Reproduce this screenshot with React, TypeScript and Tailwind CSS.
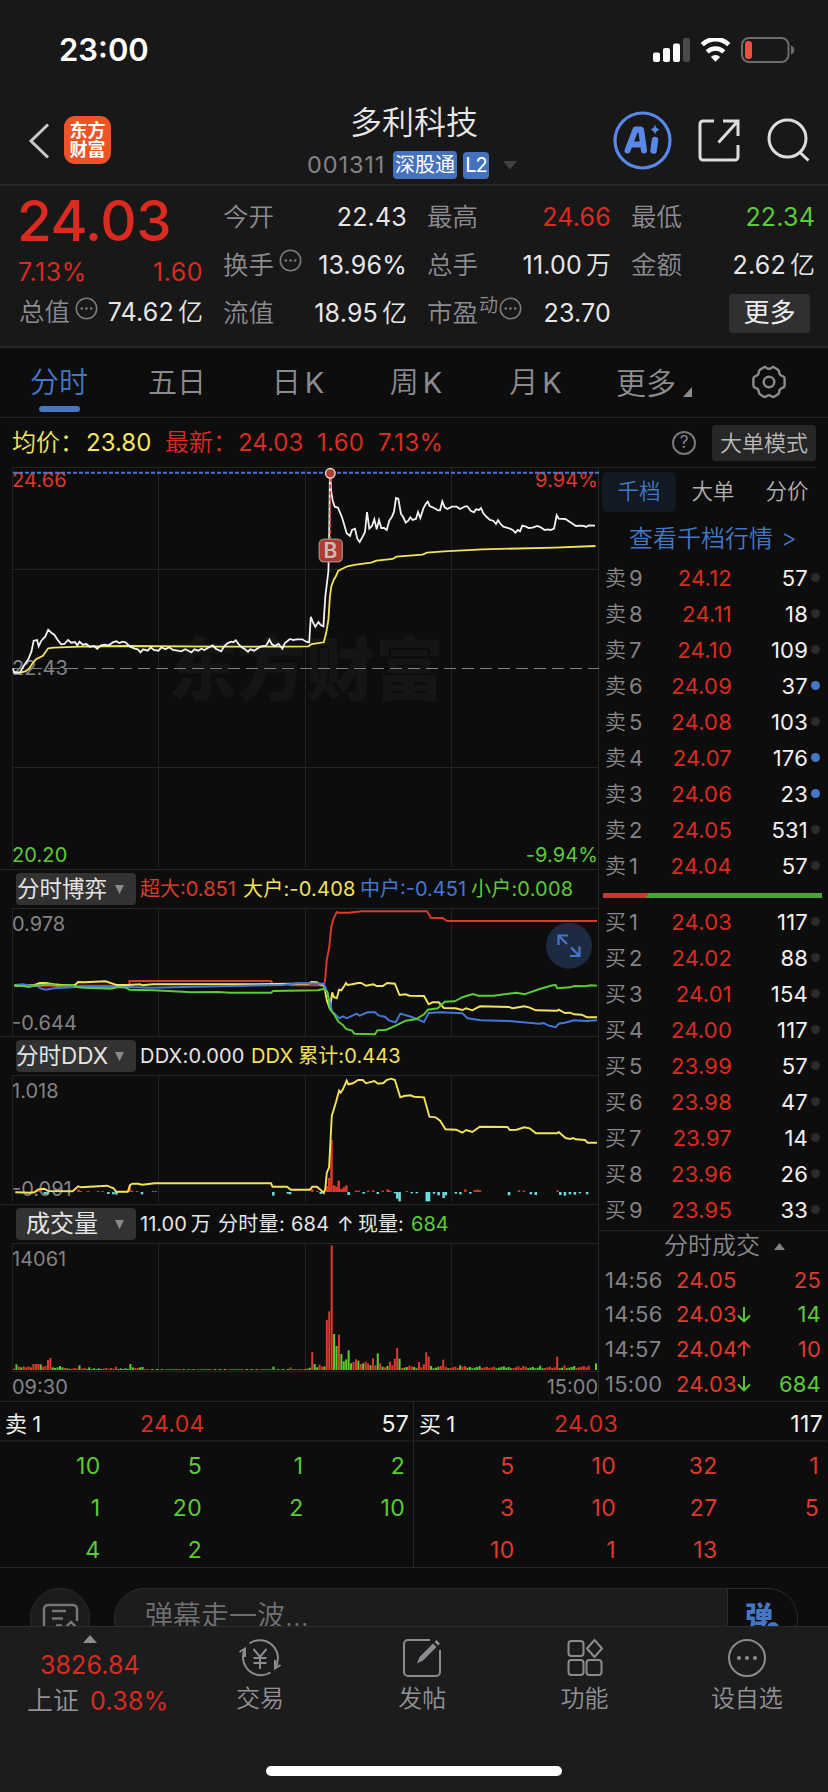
import type { ReactNode } from 'react';

const CX = 2.613;

/** Turns "x,y x,y" samples into polyline points in chart coordinates. */
function line(samples: string, sx: number, sy: number, ox: number, oy: number): string {
  return samples
    .trim()
    .split(/\s+/)
    .map((p) => {
      const [x, y] = p.split(',').map(Number);
      return `${(ox + x / sx).toFixed(1)},${(oy + y / sy).toFixed(1)}`;
    })
    .join(' ');
}

const PRICE_AM =
  '34,776 37,788 52,788 62,768 74,748 82,725 88,692 97,690 101,709 108,692 118,680 126,659 134,668 142,674 152,692 160,703 168,702 178,690 186,698 196,696 202,706 208,695 216,704 226,702 234,710 246,708 254,716 264,706 274,704 284,706 296,696 304,694 312,699 320,695 328,697 340,710 352,716 360,718 367,727 374,718 386,722 394,712 402,720 414,722 422,712 432,718 442,712 452,720 464,722 474,724 484,718 492,722 500,727 508,718 518,722 526,716 534,720 546,712 556,706 564,716 578,724 584,712 594,700 604,695 610,697 616,691 624,703 632,712 640,718 648,725 654,718 664,722 672,716 680,710 690,708 696,706 704,689 710,702 718,708 728,702 738,716 744,700 752,692 758,687 766,690 776,688 790,688 800,695 808,697 812,620 818,638 824,650 832,636 838,645 845,649 850,560 858,484 860,400 862,190';
const PRICE_PM =
  '151,100 153,150 158,182 164,200 174,203 186,232 200,280 210,288 216,270 225,266 232,296 239,306 248,290 255,276 261,216 268,266 276,258 283,238 290,268 297,240 304,264 312,264 320,270 328,242 336,230 342,215 348,174 355,176 363,222 370,232 377,248 385,242 391,232 398,240 408,236 414,216 421,234 430,206 437,192 443,185 449,198 458,202 466,206 474,211 480,211 487,184 494,202 502,207 516,200 530,200 540,207 556,199 562,199 572,212 582,217 588,208 597,210 603,204 610,220 620,231 630,240 640,242 648,252 654,241 662,252 670,260 680,263 690,266 698,270 706,278 714,270 720,274 727,257 738,260 746,264 758,263 766,260 772,258 782,262 794,270 802,268 812,270 822,266 830,226 836,236 856,237 870,246 888,258 900,257 912,258 918,261 926,256 945,257';
const AVERAGE =
  '34,786 52,788 66,784 76,776 84,762 94,748 112,737 126,715 140,713 210,710 330,708 560,710 740,710 806,709 814,702 846,697 852,670 858,630 862,560 866,528 872,510 878,498 884,482 900,473 910,468 930,464 970,458 984,452 1026,447 1036,440 1104,434 1116,428 1160,424 1260,418 1450,413 1556,408';

const GAME = [
  {
    color: '#dd3a2e',
    pts: '38,362 338,362 338,348 708,348 712,356 750,357 760,361 846,361 849,350 854,284 860,250 866,184 872,160 880,141 884,143 910,143 946,139 1116,139 1126,158 1156,159 1168,168 1560,168',
  },
  {
    color: '#f3e35c',
    pts: '38,362 90,360 104,354 120,354 140,358 160,360 196,360 204,351 220,352 276,349 294,356 304,360 336,360 366,358 372,361 400,358 520,358 640,358 760,356 806,356 814,351 828,352 836,358 847,362 854,406 862,432 868,382 872,396 880,400 886,374 892,376 900,362 904,354 908,360 920,358 936,354 944,354 956,362 976,358 984,363 1000,363 1012,354 1032,356 1044,390 1060,388 1070,392 1108,393 1120,418 1130,412 1146,412 1160,429 1190,430 1208,435 1218,430 1234,436 1254,424 1330,426 1340,430 1370,424 1384,428 1400,436 1456,437 1460,434 1476,444 1490,443 1500,448 1520,449 1534,457 1560,457',
  },
  {
    color: '#4477d6',
    pts: '38,360 60,358 80,362 96,362 106,370 120,374 140,370 200,366 336,366 400,368 480,366 640,362 740,360 780,354 846,356 852,372 862,410 868,440 876,448 886,460 896,454 906,460 932,446 940,452 960,442 980,442 990,452 1006,455 1016,466 1034,472 1046,446 1076,456 1108,471 1120,444 1150,442 1208,445 1222,460 1256,466 1330,468 1410,476 1420,474 1434,482 1452,487 1460,476 1476,473 1500,466 1530,468 1560,466',
  },
  {
    color: '#5bcb36',
    pts: '38,360 64,364 76,366 90,362 110,360 130,358 150,362 190,360 200,366 220,368 290,371 310,366 330,368 338,374 400,376 440,378 500,382 570,381 600,383 708,383 714,378 830,376 846,372 856,382 862,432 874,450 884,470 896,480 904,492 920,497 926,506 980,508 986,496 1010,494 1034,482 1060,467 1088,462 1108,448 1118,434 1144,430 1162,410 1188,409 1210,396 1236,387 1250,392 1290,392 1350,383 1370,388 1410,372 1444,361 1452,360 1456,370 1490,367 1500,363 1530,364 1544,361 1560,362',
  },
];

const DDX =
  '40,487 80,488 90,487 100,478 116,476 126,483 190,484 204,469 212,472 280,467 290,472 296,474 304,485 334,485 340,465 346,461 360,461 372,464 404,460 708,460 712,470 750,470 760,479 810,479 816,470 828,470 838,480 846,489 850,476 854,428 860,412 867,258 878,216 886,182 890,188 896,178 906,152 910,163 922,160 936,150 948,150 956,160 978,153 988,161 1002,159 1010,150 1022,146 1032,150 1046,202 1056,198 1072,196 1082,200 1108,202 1122,260 1138,262 1150,272 1164,298 1192,299 1208,308 1218,300 1234,306 1254,290 1326,291 1332,300 1350,299 1370,292 1384,295 1400,310 1456,310 1460,306 1478,324 1490,327 1498,324 1504,328 1528,330 1536,338 1560,338';

/** [x, signed height] pairs; positive is inflow, negative is outflow. */
const DDX_BARS: [number, number][] = [
  [98, 5], [104, 8], [117, -6], [124, -8], [205, 8], [211, 3], [230, 3], [256, 3], [268, 3], [283, -6], [296, -7], [304, -8],
  [339, 20], [345, 4], [358, 3], [371, -7], [400, 3], [407, 3], [714, -11], [752, -5], [758, -7], [816, 8], [829, 3], [838, -6],
  [854, 18], [860, 42], [866, 156], [873, 20], [879, 16], [885, 34], [892, 9], [898, 14], [905, 20], [911, -9], [930, 4], [937, 4],
  [950, -5], [962, 4], [975, 5], [987, -6], [1000, 4], [1013, 8], [1019, 4], [1032, -4], [1038, -20], [1044, -28], [1063, 3], [1076, -4],
  [1089, -4], [1115, -28], [1121, -28], [1134, -5], [1146, -10], [1159, -18], [1165, -10], [1191, -5], [1203, -7], [1216, 8],
  [1229, -5], [1241, 6], [1248, 7], [1254, 5], [1330, -10], [1356, 5], [1369, 4], [1387, -7], [1400, -9], [1457, 5], [1464, -9],
  [1476, -11], [1489, -7], [1502, -8], [1515, -4], [1534, -7],
];

/** Minute index at x, with signed height: positive is up (red), negative is down (green). */
const VOLUME_PEAKS: Record<number, number> = {
  0: 4, 1: -17, 2: 10, 3: -8, 4: 11, 5: 8, 6: 11, 7: 8, 8: 18, 9: 18, 10: 18, 11: -17, 12: 10, 13: 12, 14: 30, 15: 36,
  16: -8, 17: -6, 18: -8, 19: -12, 20: -8, 21: 6, 27: -14, 31: -8, 42: 10, 48: -18, 49: -8, 50: 6, 52: -8, 53: -9,
  107: -10, 114: 8, 121: -4, 123: 54, 124: -18, 125: -8, 126: 16, 127: 10, 128: -11, 129: 150, 130: 176, 131: 374,
  132: -108, 133: -72, 134: 106, 135: -48, 136: -26, 137: -32, 138: -59, 139: -20, 140: 24, 141: 32, 142: -28, 143: 18,
  144: -20, 145: 25, 146: 20, 147: -14, 148: 35, 149: 14, 150: -50, 151: 20, 152: -10, 153: 8, 154: -12, 155: 25,
  156: 14, 157: 34, 158: 66, 159: -34, 160: 6, 163: 13, 164: 11, 167: 24, 168: 8, 169: 17, 170: 53, 171: 40, 172: -12,
  175: -10, 176: 12, 177: 31, 178: 10, 184: -14, 186: 12, 192: -12, 202: -11, 208: 11, 210: 12, 217: -13, 224: 40,
  227: 14, 231: -12, 235: 12, 237: 13, 238: 0, 239: 0, 240: -20,
};

function volumeAt(i: number): number {
  if (i in VOLUME_PEAKS) return VOLUME_PEAKS[i];
  const seed = (i * 7919 + 31) % 13;
  const sign = seed % 2 ? 1 : -1;
  if (i < 53) return sign * (3 + (seed % 4));
  if (i < 122) return sign * (seed % 4 === 0 ? 1 : 3);
  return sign * (5 + (seed % 6));
}

const SELLS: [number, string, number, boolean][] = [
  [9, '24.12', 57, false],
  [8, '24.11', 18, false],
  [7, '24.10', 109, false],
  [6, '24.09', 37, true],
  [5, '24.08', 103, false],
  [4, '24.07', 176, true],
  [3, '24.06', 23, true],
  [2, '24.05', 531, false],
  [1, '24.04', 57, false],
];

const BUYS: [number, string, number, boolean][] = [
  [1, '24.03', 117, false],
  [2, '24.02', 88, false],
  [3, '24.01', 154, false],
  [4, '24.00', 117, false],
  [5, '23.99', 57, false],
  [6, '23.98', 47, false],
  [7, '23.97', 14, false],
  [8, '23.96', 26, false],
  [9, '23.95', 33, false],
];

function StatusBar() {
  return (
    <div className="flex h-[100px] items-center justify-between pl-[59px] pr-[33px]">
      <span className="text-[31px] font-semibold text-white">23:00</span>
      <div className="flex items-center gap-[10px]">
        <svg width="37" height="24" viewBox="0 0 37 24">
          <rect x="0" y="14.5" width="7" height="9.5" rx="2" fill="#fff" />
          <rect x="10" y="10" width="7" height="14" rx="2" fill="#fff" />
          <rect x="20" y="5.5" width="7" height="18.5" rx="2" fill="#fff" />
          <rect x="30" y="0" width="7" height="24" rx="2" fill="#4a4a4a" />
        </svg>
        <svg width="31" height="24" viewBox="0 0 31 24">
          <path d="M2.2 8.6a19 19 0 0 1 26.6 0" fill="none" stroke="#fff" strokeWidth="4.6" transform="translate(0 -2)" />
          <path d="M7.2 14.2a12 12 0 0 1 16.6 0" fill="none" stroke="#fff" strokeWidth="4.4" transform="translate(0 -.4)" />
          <path d="M15.5 23.8l-4.6-4.9a6.8 6.8 0 0 1 9.2 0z" fill="#fff" />
        </svg>
        <svg width="54" height="26" viewBox="0 0 54 26">
          <rect x="1" y="1" width="46.500" height="24" rx="7" fill="none" stroke="#6d6d6d" strokeWidth="2" />
          <rect x="4" y="4" width="7" height="18" rx="3" fill="#e8513f" />
          <path d="M50 8.500c2.200.8 3.300 2.500 3.300 4.500s-1.100 3.700-3.300 4.500z" fill="#6d6d6d" />
        </svg>
      </div>
    </div>
  );
}

function Header() {
  return (
    <div className="flex h-[84px] items-start">
      <svg className="ml-[28px] mt-[23px]" width="22" height="36" viewBox="0 0 22 36">
        <path d="M20 1.500L3 18l17 16.500" fill="none" stroke="#c9c9c9" strokeWidth="3" />
      </svg>
      <div className="ml-[14px] mt-[16px] flex h-[48px] w-[47px] flex-col items-center justify-center rounded-[11px] bg-[#ec5428] text-[18px] font-bold leading-[19px] text-white">
        <span>东方</span>
        <span>财富</span>
      </div>
      <div className="ml-[143px] mt-[5px] flex w-[320px] flex-col items-center">
        <div className="flex h-[36px] items-center text-[32px] font-[350] leading-none text-[#e8e8e8]">多利科技</div>
        <div className="mt-[8px] flex h-[32px] w-[320px] items-center pl-[53px]">
          <span className="w-[86px] text-[23.500px] leading-none tracking-[0.9px] text-[#838387]">001311</span>
          <span className="flex h-[28px] w-[64px] items-center justify-center rounded-[4px] bg-[#4472bd] text-[20px] leading-none text-white">深股通</span>
          <span className="ml-[6px] flex h-[27px] w-[26px] items-center justify-center rounded-[4px] bg-[#4472bd] text-[20px] leading-none tracking-[-1px] text-white">L2</span>
          <svg className="ml-[14px]" width="14" height="9" viewBox="0 0 14 9">
            <path d="M0 0h14L7 8.500z" fill="#414141" />
          </svg>
        </div>
      </div>
      <svg className="ml-[39px] mt-[11px]" width="59" height="59" viewBox="0 0 59 59">
        <circle cx="29.500" cy="29.500" r="27.500" fill="none" stroke="#5a88e8" strokeWidth="3.200" />
        <path d="M14.500 39.500L22.500 18.500h5.500l3 21M19 33.500h11" fill="none" stroke="#5a88e8" strokeWidth="6" strokeLinejoin="round" strokeLinecap="round" />
        <path d="M42 29l-1.400 10.500" stroke="#5a88e8" strokeWidth="6.500" strokeLinecap="round" />
        <path d="M42 13.500q1 4.500 5 5q-4 .8-5 5q-1-4.200-5-5q4-.5 5-5z" fill="#5a88e8" />
      </svg>
      <svg className="ml-[26px] mt-[19px]" width="43" height="43" viewBox="0 0 43 43" fill="none" stroke="#dcdcdc" strokeWidth="3">
        <path d="M16 2H5a3 3 0 0 0-3 3v33a3 3 0 0 0 3 3h32a3 3 0 0 0 3-3V26" />
        <path d="M25 2h15v15M40 2L20.500 23.500" />
      </svg>
      <svg className="ml-[26px] mt-[18px]" width="44" height="44" viewBox="0 0 44 44" fill="none" stroke="#dcdcdc" strokeWidth="3">
        <circle cx="20.500" cy="20.500" r="18.500" />
        <path d="M32.500 34l9 8.500" />
      </svg>
    </div>
  );
}

function More({ className }: { className: string }) {
  return (
    <svg className={className} width="23" height="23" viewBox="0 0 23 23">
      <circle cx="11.500" cy="11.500" r="10.200" fill="none" stroke="#7b7b7f" strokeWidth="1.600" />
      <circle cx="6.800" cy="11.500" r="1.300" fill="#7b7b7f" />
      <circle cx="11.500" cy="11.500" r="1.300" fill="#7b7b7f" />
      <circle cx="16.200" cy="11.500" r="1.300" fill="#7b7b7f" />
    </svg>
  );
}

function Stat({ label, value, unit, tone = 'text-[#e6e6e6]', extra }: { label: string; value: string; unit?: string; tone?: string; extra?: ReactNode }) {
  return (
    <div className="flex h-[48px] items-center leading-none">
      <span className="text-[25.500px] font-[350] text-[#8c8c90]">{label}</span>
      {extra}
      <span className={`ml-auto whitespace-nowrap text-[25px] tracking-[0.2px] ${tone}`}>{value}</span>
      {unit && <span className={`ml-[4px] text-[25px] font-[350] ${tone}`}>{unit}</span>}
    </div>
  );
}

function Quote() {
  return (
    <div className="flex h-[160px] gap-[20px] border-t-2 border-[#262626] pl-[19px] pt-[7px] leading-none">
      <div className="w-[184px]">
        <div className="-ml-[2px] flex h-[56px] items-center text-[56.500px] font-medium tracking-[-0.5px] text-[#d92b20]">24.03</div>
        <div className="-ml-[1px] flex h-[46px] items-center justify-between text-[25px] tracking-[0.5px] text-[#d92b20]">
          <span>7.13%</span>
          <span>1.60</span>
        </div>
        <div className="flex h-[34px] items-center">
          <span className="text-[25.500px] font-[350] text-[#8c8c90]">总值</span>
          <More className="-mt-[8px] ml-[5px]" />
          <span className="ml-auto whitespace-nowrap text-[25px] tracking-[0.2px] text-[#e6e6e6]">74.62</span>
          <span className="ml-[4px] text-[25px] font-[350] text-[#e6e6e6]">亿</span>
        </div>
      </div>
      <div className="w-[184px]">
        <Stat label="今开" value="22.43" />
        <Stat label="换手" value="13.96%" extra={<More className="-mt-[9px] ml-[5px]" />} />
        <Stat label="流值" value="18.95" unit="亿" />
      </div>
      <div className="w-[184px]">
        <Stat label="最高" value="24.66" tone="text-[#d92b20]" />
        <Stat label="总手" value="11.00" unit="万" />
        <Stat
          label="市盈"
          value="23.70"
          extra={
            <>
              <span className="-mt-[15px] ml-[1px] text-[19px] font-[350] text-[#8c8c90]">动</span>
              <More className="-mt-[9px] ml-[1px]" />
            </>
          }
        />
      </div>
      <div className="w-[184px]">
        <Stat label="最低" value="22.34" tone="text-[#5ccb36]" />
        <Stat label="金额" value="2.62" unit="亿" />
        <div className="flex h-[48px] items-center justify-end pr-[5px]">
          <span className="flex h-[39px] w-[81px] items-center justify-center rounded-[4px] bg-[#303030] text-[26px] text-[#eeeeee]">更多</span>
        </div>
      </div>
    </div>
  );
}

function Tabs() {
  return (
    <div className="flex h-[72px] border-b border-t-2 border-[#262626] bg-[#0d0d0d] text-[29px] leading-none text-[#8c8c90]">
      <div className="flex w-[118px] flex-col items-center text-[#4577c4]">
        <span className="mt-[20px] font-[350]">分时</span>
        <span className="mt-[9px] h-[6px] w-[41px] rounded-[3px] bg-[#4577c4]" />
      </div>
      <div className="w-[118px] pt-[20px] text-center font-[350]">五日</div>
      <div className="flex w-[124px] justify-center gap-[4px] pt-[20px]">
        <span className="font-[350]">日</span>K
      </div>
      <div className="flex w-[112px] justify-center gap-[4px] pt-[20px]">
        <span className="font-[350]">周</span>K
      </div>
      <div className="flex w-[127px] justify-center gap-[4px] pt-[20px]">
        <span className="font-[350]">月</span>K
      </div>
      <div className="flex w-[106px] pl-[17px] pt-[20px] text-[30px] font-[350]">
        <span>更多</span>
        <svg className="ml-[7px] mt-[19px]" width="9" height="10" viewBox="0 0 9 10">
          <path d="M9 0v10H0z" fill="#8c8c90" />
        </svg>
      </div>
      <svg className="ml-[46px] mt-[17px]" width="36" height="34" viewBox="0 0 36 34" fill="none" stroke="#8c8c90" strokeWidth="2.400" strokeLinejoin="round">
        <path d="M12.500 2.500Q14 1.500 15.200 2.600Q18 5 20.800 2.600Q22 1.500 23.500 2.500L27 4.800Q28.200 5.700 28.200 7.500Q28.500 10.500 31.500 11.200Q33.500 11.800 33.600 13.400V20.600Q33.500 22.200 31.500 22.800Q28.500 23.500 28.200 26.500Q28.200 28.300 27 29.200L23.500 31.500Q22 32.500 20.800 31.400Q18 29 15.200 31.400Q14 32.500 12.500 31.500L9 29.200Q7.800 28.300 7.800 26.500Q7.500 23.500 4.500 22.800Q2.500 22.200 2.400 20.600V13.400Q2.500 11.800 4.500 11.200Q7.500 10.500 7.800 7.500Q7.800 5.700 9 4.800Z" />
        <circle cx="18" cy="17" r="5.300" />
      </svg>
    </div>
  );
}

function InfoRow() {
  return (
    <div className="flex h-[49px] items-center pl-[12px] text-[24px] leading-none">
      <span className="w-[74px] whitespace-nowrap font-[350] text-[#f5e663]">均价：</span>
      <span className="w-[79px] text-[#f5e663]">23.80</span>
      <span className="w-[73px] whitespace-nowrap font-[350] text-[#d92b20]">最新：</span>
      <span className="w-[79px] text-[#d92b20]">24.03</span>
      <span className="w-[61px] tracking-[0.3px] text-[#d92b20]">1.60</span>
      <span className="tracking-[0.4px] text-[#d92b20]">7.13%</span>
      <span className="ml-auto flex h-[24px] w-[24px] items-center justify-center rounded-full border-2 border-[#77777b] text-[17px] text-[#8c8c90]">?</span>
      <span className="ml-[16px] mr-[12px] flex h-[36px] w-[104px] items-center justify-center rounded-[4px] bg-[#272727] text-[22px] font-[350] text-[#bababa]">大单模式</span>
    </div>
  );
}

function Grid({ top, bottom }: { top: number; bottom: number }) {
  return (
    <g stroke="#222222" strokeWidth="1">
      <path d={`M12.500 ${top}V${bottom}M158.500 ${top}V${bottom}M305.500 ${top}V${bottom}M451.500 ${top}V${bottom}`} />
    </g>
  );
}

function PriceChart() {
  return (
    <div className="relative h-[402px] text-[20px] leading-none">
      <div className="absolute left-[168px] top-[169px] text-[69px] font-black leading-none text-[#151515]">东方财富</div>
      <span className="absolute left-[12px] top-[3px] tracking-[0.1px] text-[#dd3a2e]">24.66</span>
      <span className="absolute right-0 top-[3px] tracking-[0.1px] text-[#dd3a2e]">9.94%</span>
      <span className="absolute left-[12px] top-[191px] tracking-[0.1px] text-[#838387]">22.43</span>
      <span className="absolute bottom-[4px] left-[12px] tracking-[0.1px] text-[#5ccb36]">20.20</span>
      <span className="absolute bottom-[4px] right-0 tracking-[0.1px] text-[#5ccb36]">-9.94%</span>
      <svg className="relative ml-[12px] block" width="587" height="402" viewBox="12 467 587 402" fill="none">
        <Grid top={467} bottom={867} />
        <path d="M12 467.500H599M12 569.500H599M12 767.500H599" stroke="#242424" />
        <path d="M12 668.500H599" stroke="#7f7f83" strokeWidth="1.200" strokeDasharray="12 6" />
        <path d="M13 472.700H599" stroke="#4878c8" strokeWidth="2" strokeDasharray="4 2" />
        <polyline points={line(AVERAGE, CX, 3, 0, 410)} stroke="#f3e35c" strokeWidth="1.800" />
        <polyline points={line(PRICE_AM, CX, 3, 0, 410)} stroke="#f2f2f2" strokeWidth="1.800" />
        <polyline points={line(PRICE_PM, 3, 3, 280, 440)} stroke="#f2f2f2" strokeWidth="1.800" />
        <path d="M330.300 478V539" stroke="#dd4a3c" strokeWidth="1.800" strokeDasharray="4 2.500" />
        <circle cx="330.300" cy="473.300" r="4.800" fill="#b23b2f" stroke="#ddd" strokeWidth="1.400" />
        <rect x="319.300" y="539.300" width="23" height="22.500" rx="4.500" fill="#b03a2d" stroke="#97807d" strokeWidth="1.500" />
      </svg>
      <span className="absolute left-[319px] top-[73px] w-[23px] text-center text-[21px] font-semibold text-[#c8bcbb]">B</span>
    </div>
  );
}

function PanelHeader({ name, nameClass = 'text-[22.500px]', children }: { name: string; nameClass?: string; children: ReactNode }) {
  return (
    <div className="flex h-[39px] items-center border-t border-[#262626] pl-[16px] text-[20px] leading-none">
      <div className="flex h-[32px] w-[120px] items-center rounded-[4px] bg-[#323232] text-[#e4e4e4]">
        <span className={`w-[92px] whitespace-nowrap text-center ${nameClass}`}>{name}</span>
        <svg className="ml-[7px]" width="9" height="9" viewBox="0 0 9 9">
          <path d="M0 0h9L4.500 9z" fill="#8a8a8e" />
        </svg>
      </div>
      <div className="ml-[4px] flex items-center whitespace-nowrap">{children}</div>
    </div>
  );
}

function GameChart() {
  return (
    <div className="relative h-[128px] text-[20px] leading-none text-[#838387]">
      <span className="absolute left-[12px] top-[6px]">0.978</span>
      <span className="absolute left-[12px] top-[105px]">-0.644</span>
      <svg className="relative ml-[12px] block" width="587" height="128" viewBox="12 908 587 128" fill="none">
        <Grid top={908} bottom={1036} />
        <path d="M12 908.500H599" stroke="#262626" />
        {GAME.map((s) => (
          <polyline key={s.color} points={line(s.pts, CX, 3, 0, 865)} stroke={s.color} strokeWidth="1.900" />
        ))}
        <circle cx="569" cy="945.700" r="23" fill="#1d2b42" />
        <path d="M558.500 945v-9.500h9.500M558.500 935.500l8.500 8.500M579.500 946.500v9.500h-9.500M579.500 956l-8.500-8.500" stroke="#4577c4" strokeWidth="2.200" />
      </svg>
    </div>
  );
}

function DdxChart() {
  return (
    <div className="relative h-[129px] text-[20px] leading-none text-[#838387]">
      <span className="absolute left-[12px] top-[6px]">1.018</span>
      <span className="absolute left-[12px] top-[104px]">-0.091</span>
      <svg className="relative ml-[12px] block" width="587" height="129" viewBox="12 1075 587 129" fill="none">
        <Grid top={1075} bottom={1202} />
        <path d="M12 1075.500H599" stroke="#262626" />
        {DDX_BARS.map(([x, h]) => (
          <rect
            key={x}
            x={x / CX - 1.2}
            y={h > 0 ? 1192 - h / 3 : 1192}
            width="2.500"
            height={Math.abs(h) / 3}
            fill={h > 0 ? '#dd3a2e' : '#6fdce0'}
          />
        ))}
        <polyline points={line(DDX, CX, 3, 0, 1030)} stroke="#f3e35c" strokeWidth="1.900" />
      </svg>
    </div>
  );
}

function VolumeChart() {
  return (
    <div className="relative h-[129px] text-[20px] leading-none text-[#838387]">
      <span className="absolute left-[12px] top-[6px]">14061</span>
      <svg className="relative ml-[12px] block" width="587" height="129" viewBox="12 1243 587 129" fill="none">
        <Grid top={1243} bottom={1371} />
        <path d="M12 1243.500H599M12 1371.500H599" stroke="#262626" />
        {Array.from({ length: 241 }, (_, i) => {
          const v = volumeAt(i);
          const h = Math.abs(v) / 3;
          return <rect key={i} x={13 + i * 2.425} y={1370 - h} width="2" height={h} fill={v > 0 ? '#dd3a2e' : '#5bcb36'} />;
        })}
      </svg>
    </div>
  );
}

function BookRow({ side, row }: { side: string; row: [number, string, number, boolean] }) {
  const [level, price, qty, lit] = row;
  return (
    <div className="flex h-[36px] items-center text-[22px] leading-none tracking-[0.2px]">
      <span className="w-[22px] text-[21px] font-[350] text-[#8a8a8e]">{side}</span>
      <span className="w-[20px] pl-[2px] text-[#838387]">{level}</span>
      <span className="w-[85px] text-right text-[#d92b20]">{price}</span>
      <span className="w-[76px] text-right text-[#f2f2f2]">{qty}</span>
      <span className={`ml-[3px] h-[9px] w-[9px] rounded-full ${lit ? 'bg-[#4577c4]' : 'bg-[#2b2b2b]'}`} />
    </div>
  );
}

function Trade({ time, price, arrow, qty, up }: { time: string; price: string; arrow?: 'up' | 'down'; qty: number; up: boolean }) {
  return (
    <div className="flex h-[34.700px] items-center text-[22px] leading-none tracking-[0.2px]">
      <span className="w-[71px] text-[#838387]">{time}</span>
      <span className="w-[61px] text-[#dd3a2e]">{price}</span>
      <svg width="14" height="17" viewBox="0 0 14 17" fill="none" strokeWidth="1.900">
        {arrow === 'down' && <path d="M7 1v14M1 9.500l6 6l6-6" stroke="#5bcb36" />}
        {arrow === 'up' && <path d="M7 16V2M1 7.500l6-6l6 6" stroke="#dd3a2e" />}
      </svg>
      <span className={`ml-auto ${up ? 'text-[#dd3a2e]' : 'text-[#5bcb36]'}`}>{qty}</span>
    </div>
  );
}

function OrderBook() {
  return (
    <div className="flex w-[230px] flex-col border-l border-[#262626]">
      <div className="mr-[12px] border-t border-[#262626]" />
      <div className="ml-[3px] mt-[4px] flex h-[40px] items-center text-[21.500px] font-[350] leading-none text-[#b0b0b0]">
        <span className="flex h-[40px] w-[74px] items-center justify-center rounded-[5px] bg-[#111923] text-[#4577c4]">千档</span>
        <span className="w-[74px] text-center">大单</span>
        <span className="w-[74px] text-center">分价</span>
      </div>
      <div className="mt-[6px] flex h-[42px] items-center pl-[30px] text-[24px] font-[350] leading-none text-[#4577c4]">
        查看千档行情<span className="ml-[8px]">&gt;</span>
      </div>
      <div className="pl-[6px]">
        {SELLS.map((r) => (
          <BookRow key={r[0]} side="卖" row={r} />
        ))}
      </div>
      <div className="mb-[6px] ml-[4px] mt-[9px] flex h-[5px] w-[219px] bg-[#4ba233]">
        <svg width="46" height="5" viewBox="0 0 46 5">
          <path d="M0 0h46l-4 5H0z" fill="#c23a32" />
        </svg>
      </div>
      <div className="pl-[6px]">
        {BUYS.map((r) => (
          <BookRow key={r[0]} side="买" row={r} />
        ))}
      </div>
      <div className="mt-[2px] flex h-[33px] items-center border-t border-[#262626] pl-[65px] text-[24px] font-[350] leading-none text-[#8a8a8e]">
        分时成交
        <svg className="ml-[14px]" width="11" height="7" viewBox="0 0 11 7">
          <path d="M0 7h11L5.500 0z" fill="#838387" />
        </svg>
      </div>
      <div className="pl-[6px] pr-[7px]">
        <Trade time="14:56" price="24.05" qty={25} up />
        <Trade time="14:56" price="24.03" arrow="down" qty={14} up={false} />
        <Trade time="14:57" price="24.04" arrow="up" qty={10} up />
        <Trade time="15:00" price="24.03" arrow="down" qty={684} up={false} />
      </div>
    </div>
  );
}

function Queue({ label, price, total, tone, values }: { label: string; price: string; total: number; tone: string; values: (number | null)[] }) {
  return (
    <div className="w-[413px] text-[23px] leading-none tracking-[0.3px]">
      <div className="flex h-[40px] items-center border-b-2 border-[#191919] pl-[5px] pr-[4px] pt-[6px] text-[#f0f0f0]">
        <span className="w-[135px] text-[22px]">
          {label}
          <span className="ml-[5px]">1</span>
        </span>
        <span className="text-[#d92b20]">{price}</span>
        <span className="ml-auto">{total}</span>
      </div>
      <div className={`-ml-[1px] grid w-[406px] grid-cols-4 pt-[4px] ${tone}`}>
        {values.map((v, i) => (
          <span key={i} className="flex h-[41.700px] items-center justify-end">
            {v}
          </span>
        ))}
      </div>
    </div>
  );
}

function Danmaku() {
  return (
    <div className="flex h-[59px] items-start overflow-hidden border-t border-[#262626] pl-[30px] pt-[20px]">
      <div className="flex h-[60px] w-[60px] shrink-0 justify-center rounded-full border border-[#2b2b2b] bg-[#1c1c1c] pt-[14px]">
        <svg width="38" height="32" viewBox="0 0 38 32" fill="none" stroke="#77777b" strokeWidth="2.400">
          <path d="M3 32V6a4 4 0 0 1 4-4h25a4 4 0 0 1 4 4v12M11 8h14M11 15.500h11M15 22.500h6M23 26l7-7l7 7" />
        </svg>
      </div>
      <div className="ml-[24px] flex h-[60px] w-[684px] shrink-0 overflow-hidden rounded-full border border-[#2b2b2b] bg-[#1c1c1c]">
        <div className="w-[612px] pl-[30px] pt-[13px] text-[28px] font-[350] leading-none text-[#707073]">弹幕走一波...</div>
        <div className="relative flex-1 border-l border-[#2b2b2b] bg-[#0d0d0d] pl-[17px] pt-[14px] text-[28px] font-black leading-none text-[#4577c4]">
          弹
          <span className="absolute left-[37px] top-[31px] h-[16px] w-[16px] rounded-full border-2 border-[#0d0d0d] bg-[#4577c4]" />
        </div>
      </div>
    </div>
  );
}

function NavItem({ label, children }: { label: string; children: ReactNode }) {
  return (
    <div className="flex w-[162.300px] flex-col items-center pt-[11px]">
      <svg width="46" height="40" viewBox="0 0 46 40" fill="none" stroke="#8c8c90" strokeWidth="2">
        {children}
      </svg>
      <span className="mt-[9px] text-[24px] font-[350] leading-none text-[#929296]">{label}</span>
    </div>
  );
}

function BottomNav() {
  return (
    <div className="flex h-[166px] flex-col border-t border-[#2c2c2c] bg-[#1c1c1c]">
      <div className="flex h-[138px]">
        <div className="flex w-[179px] flex-col pt-[8px] leading-none">
          <svg className="ml-[83px]" width="14" height="8" viewBox="0 0 14 8">
            <path d="M0 8h14L7 0z" fill="#8c8c90" />
          </svg>
          <span className="ml-[40px] mt-[10px] text-[25px] tracking-[0.1px] text-[#d92b20]">3826.84</span>
          <div className="ml-[27px] mt-[10px] flex items-center whitespace-nowrap text-[25px]">
            <span className="w-[63px] text-[26px] font-[350] text-[#929296]">上证</span>
            <span className="tracking-[0.3px] text-[#d92b20]">0.38%</span>
          </div>
        </div>
        <NavItem label="交易">
          <path d="M12.500 5.500A18 18 0 0 1 38 30M33.500 34.500A18 18 0 0 1 8 11M2.500 14l5.500-3.500V19M43.500 27l-5.500 3.500V22" />
          <path d="M16.500 11L23 19l6.500-8M23 19v12M16.500 20h13M16.500 25h13" />
        </NavItem>
        <NavItem label="发帖">
          <path d="M31 2H9a4 4 0 0 0-4 4v28a4 4 0 0 0 4 4h28a4 4 0 0 0 4-4V12" />
          <path d="M18 25.500L20.500 19L34 5.500l3.500 3.500L24 22.500zM35.500 4l2-2l3.500 3.500l-2 2z" fill="#8c8c90" stroke="none" />
        </NavItem>
        <NavItem label="功能">
          <rect x="6.500" y="3" width="15" height="15" rx="3" />
          <rect x="6.500" y="22" width="15" height="15" rx="3" />
          <rect x="24.500" y="22" width="15" height="15" rx="3" />
          <path d="M32.500 2l7.500 8.500l-7.500 8.500l-7.500-8.500z" strokeLinejoin="round" />
        </NavItem>
        <NavItem label="设自选">
          <circle cx="23" cy="20" r="18" />
          <g fill="#8c8c90" stroke="none">
            <circle cx="15" cy="20" r="2.100" />
            <circle cx="23" cy="20" r="2.100" />
            <circle cx="31" cy="20" r="2.100" />
          </g>
        </NavItem>
      </div>
      <div className="mx-auto mt-[1px] h-[10px] w-[296px] rounded-full bg-white" />
    </div>
  );
}

export default function App() {
  return (
    <div className="flex h-[1792px] w-[828px] flex-col overflow-hidden bg-[#0d0d0d] font-['Inter','Noto_Sans_CJK_SC',sans-serif]">
      <div className="h-[346px] bg-[#181818]">
        <StatusBar />
        <Header />
        <Quote />
      </div>
      <Tabs />
      <InfoRow />
      <div className="flex h-[934px]">
        <div className="w-[598px]">
          <PriceChart />
          <PanelHeader name="分时博弈">
            <span className="w-[103px] text-[#dd3a2e]">超大:0.851</span>
            <span className="w-[117px] tracking-[0.2px] text-[#f3e35c]">大户:-0.408</span>
            <span className="w-[111px] text-[#4577d0]">中户:-0.451</span>
            <span className="tracking-[0.2px] text-[#5bcb36]">小户:0.008</span>
          </PanelHeader>
          <GameChart />
          <PanelHeader name="分时DDX">
            <span className="w-[111px] tracking-[0.2px] text-[#e6e6e6]">DDX:0.000</span>
            <span className="tracking-[0.1px] text-[#f3e35c]">
              DDX<span className="ml-[5px]">累计:0.443</span>
            </span>
          </PanelHeader>
          <DdxChart />
          <PanelHeader name="成交量" nameClass="text-[24px]">
            <span className="w-[78px] text-[#e6e6e6]">
              11.00<span className="ml-[4px]">万</span>
            </span>
            <span className="w-[119px] tracking-[0.3px] text-[#e6e6e6]">分时量: 684</span>
            <span className="w-[21px] text-[#e6e6e6]">↑</span>
            <span className="w-[53px] text-[#e6e6e6]">现量:</span>
            <span className="text-[#5bcb36]">684</span>
          </PanelHeader>
          <VolumeChart />
          <div className="flex h-[29px] items-center justify-between pl-[12px] text-[20px] leading-none text-[#838387]">
            <span>09:30</span>
            <span>15:00</span>
          </div>
        </div>
        <OrderBook />
      </div>
      <div className="flex h-[166px] border-t border-[#262626]">
        <Queue label="卖" price="24.04" total={57} tone="text-[#5bcb36]" values={[10, 5, 1, 2, 1, 20, 2, 10, 4, 2, null, null]} />
        <div className="border-l border-[#262626]">
          <Queue label="买" price="24.03" total={117} tone="text-[#dd3a2e]" values={[5, 10, 32, 1, 3, 10, 27, 5, 10, 1, 13, null]} />
        </div>
      </div>
      <Danmaku />
      <BottomNav />
    </div>
  );
}
